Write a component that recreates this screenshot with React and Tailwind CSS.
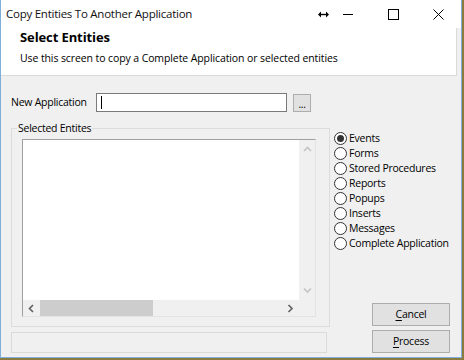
import { useState } from "react";

const OPCOES = [
  "Events",
  "Forms",
  "Stored Procedures",
  "Reports",
  "Popups",
  "Inserts",
  "Messages",
  "Complete Application",
];

function Radio({ label, checked, onClick }) {
  return (
    <div className="flex h-[15px] items-center" onClick={onClick}>
      <span className="flex h-[13px] w-[13px] items-center justify-center rounded-full border border-[#333] bg-white">
        {checked && <span className="h-[7px] w-[7px] rounded-full bg-[#333]" />}
      </span>
      <span className="ml-[2px] leading-[13px] text-black">{label}</span>
    </div>
  );
}

function Chevron({ dir, cls }) {
  const d = {
    up: "M1 5 L4.5 1.5 L8 5",
    down: "M1 1.5 L4.5 5 L8 1.5",
    left: "M5 1 L1.5 4.5 L5 8",
    right: "M1.5 1 L5 4.5 L1.5 8",
  }[dir];
  const box = dir === "up" || dir === "down" ? "0 0 9 7" : "0 0 7 9";
  const w = dir === "up" || dir === "down" ? 9 : 7;
  const h = dir === "up" || dir === "down" ? 7 : 9;
  return (
    <svg width={w} height={h} viewBox={box} className={cls}>
      <path d={d} fill="none" stroke="currentColor" strokeWidth="1.6" />
    </svg>
  );
}

function Botao({ letra, resto }) {
  return (
    <button className="flex h-[23px] w-[78px] items-center justify-center border border-[#adadad] bg-[#e1e1e1] text-black">
      <span className="underline underline-offset-2">{letra}</span>
      {resto}
    </button>
  );
}

export default function App() {
  const [opcao, setOpcao] = useState("Events");

  return (
    <div className="h-[360px] w-[464px] overflow-hidden border-b-2 border-r-2 border-[#8b7b3e] font-['Open_Sans',sans-serif] text-[10.5px] tracking-[-0.25px]">
      <div className="flex h-full flex-col border-b border-l border-r border-[#7fb0dc] bg-[#f0f0f0]">
        {/* barra de titulo */}
        <div className="flex h-[28px] shrink-0 items-center bg-white">
          <span className="flex-1 pl-[5px] text-[11.5px] text-[#111]">
            Copy Entities To Another Application
          </span>
          <svg width="11" height="7" viewBox="0 0 11 7" className="text-black">
            <path d="M0 3.5 L3 0.5 L3 6.5 Z M11 3.5 L8 0.5 L8 6.5 Z" fill="currentColor" />
            <path d="M2 3.5 H9" stroke="currentColor" strokeWidth="1.4" />
          </svg>
          <svg width="10" height="10" viewBox="0 0 10 10" className="ml-[14px] text-black">
            <path d="M0 5.5 H10" stroke="currentColor" strokeWidth="1" />
          </svg>
          <svg width="11" height="11" viewBox="0 0 11 11" className="ml-[35px] text-black">
            <rect x="0.5" y="0.5" width="10" height="10" fill="none" stroke="currentColor" strokeWidth="1" />
          </svg>
          <svg width="11" height="11" viewBox="0 0 11 11" className="ml-[34px] mr-[17px] text-black">
            <path d="M0.5 0.5 L10.5 10.5 M10.5 0.5 L0.5 10.5" stroke="currentColor" strokeWidth="1" />
          </svg>
        </div>

        {/* cabecalho */}
        <div className="h-[48px] w-[456px] shrink-0 border-b border-r border-[#dadada] bg-white pl-[19px] pt-[1px]">
          <div className="text-[13px] font-bold leading-[16px] tracking-[-0.1px] text-black">
            Select Entities
          </div>
          <div className="mt-[6px] leading-[14px] tracking-[-0.1px] text-black">
            Use this screen to copy a Complete Application or selected entities
          </div>
        </div>

        {/* nova aplicacao */}
        <div className="mt-[17px] flex items-center pl-[10px]">
          <span className="w-[85px] text-black">New Application</span>
          <div className="flex h-[19px] w-[191px] items-center border border-[#7a7a7a] bg-white pl-[4px]">
            <span className="h-[13px] w-px bg-black" />
          </div>
          <button className="ml-[6px] flex h-[18px] w-[18px] items-end justify-center border border-[#adadad] bg-[#e1e1e1] pb-[2px] text-[10px] leading-[10px] text-black">
            ...
          </button>
        </div>

        {/* area inferior */}
        <div className="mt-[10px] flex pl-[10px]">
          <div className="flex w-[319px] flex-col">
            <fieldset className="h-[205px] border border-[#dcdcdc]">
              <legend className="ml-[5px] px-[1px] leading-[13px] text-black">Selected Entites</legend>
              <div className="ml-[10px] mt-[4px] flex h-[178px] w-[294px] flex-col border border-b-[#e3e3e3] border-l-[#a0a0a0] border-r-[#e3e3e3] border-t-[#a0a0a0] bg-white">
                <div className="flex flex-1">
                  <div className="flex-1 bg-white" />
                  <div className="flex w-[16px] flex-col items-center justify-between bg-[#f0f0f0] py-[6px]">
                    <Chevron dir="up" cls="text-[#c4c4c4]" />
                    <Chevron dir="down" cls="text-[#c4c4c4]" />
                  </div>
                </div>
                <div className="flex h-[16px] bg-[#f0f0f0]">
                  <div className="flex w-[17px] items-center justify-center">
                    <Chevron dir="left" cls="text-[#606060]" />
                  </div>
                  <div className="h-[16px] w-[113px] bg-[#cdcdcd]" />
                  <div className="flex flex-1 items-center justify-end pr-[5px]">
                    <Chevron dir="right" cls="text-[#606060]" />
                  </div>
                  <div className="w-[16px]" />
                </div>
              </div>
            </fieldset>
            <div className="mt-[5px] h-[21px] w-[316px] border border-[#dadada] bg-[#f0f0f0]" />
          </div>

          <div className="ml-[4px] flex flex-1 flex-col justify-between">
            <div className="mt-[9px] flex flex-col">
              {OPCOES.map((o) => (
                <Radio key={o} label={o} checked={opcao === o} onClick={() => setOpcao(o)} />
              ))}
            </div>
            <div className="ml-[38px] flex flex-col gap-[4px]">
              <Botao letra="C" resto="ancel" />
              <Botao letra="P" resto="rocess" />
            </div>
          </div>
        </div>
      </div>
    </div>
  );
}
